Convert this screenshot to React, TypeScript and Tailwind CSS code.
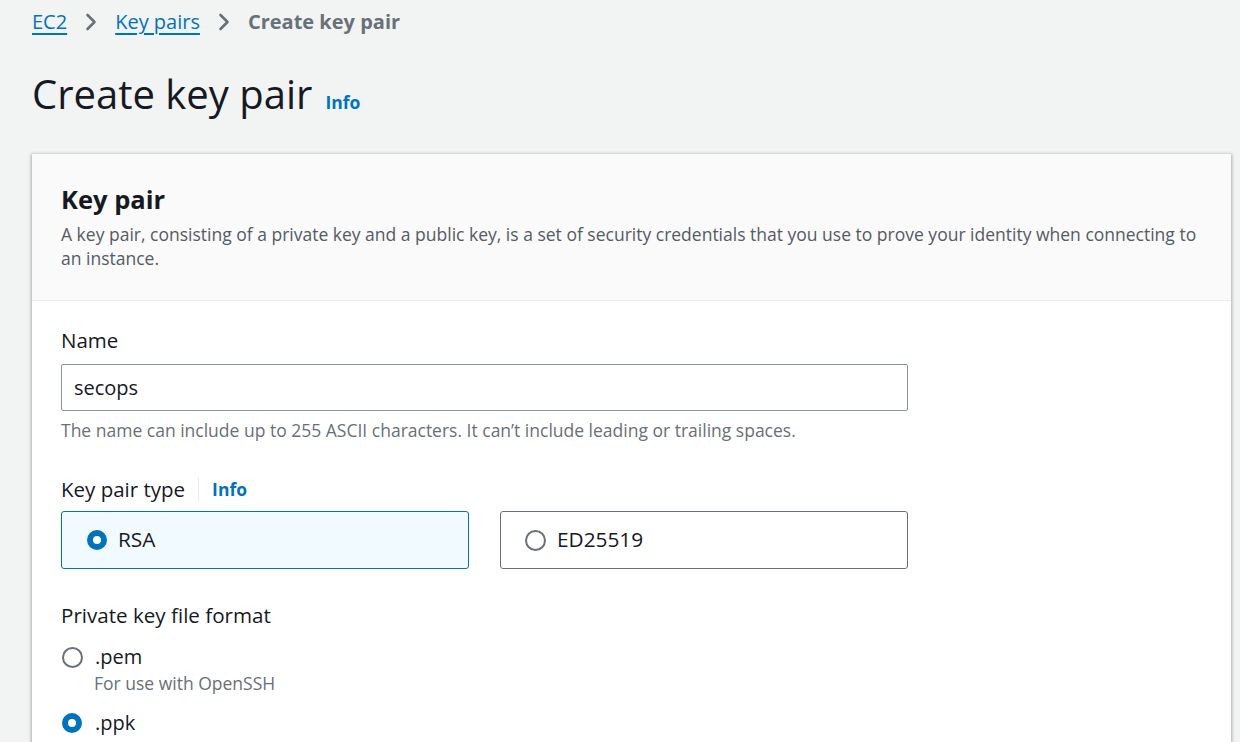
import React from "react";

const ff = { fontFamily: '"Open Sans", "Noto Sans", sans-serif' };

function Chevron() {
  return (
    <svg width="14" height="20" viewBox="0 0 14 20" className="mx-[17px]">
      <path d="M3.5 3 L10.5 10 L3.5 17" fill="none" stroke="#687078" strokeWidth="2.6" strokeLinecap="round" strokeLinejoin="round" />
    </svg>
  );
}

function Radio({ checked }: { checked: boolean }) {
  return checked ? (
    <span className="inline-block w-[20px] h-[20px] rounded-full border-[6px] border-[#0073bb] bg-white shrink-0" />
  ) : (
    <span className="inline-block w-[21px] h-[21px] rounded-full border-2 border-[#687078] bg-white shrink-0" />
  );
}

export default function App() {
  return (
    <div className="min-h-[742px] w-[1240px] bg-[#f2f3f3] text-[#16191f] overflow-hidden" style={ff}>
      <div className="pl-[32px]">
        <nav className="flex items-center h-[44px] text-[20px]">
          <a className="text-[#0073bb] underline underline-offset-[4px]">EC2</a>
          <Chevron />
          <a className="text-[#0073bb] underline underline-offset-[4px]">Key pairs</a>
          <Chevron />
          <span className="text-[#687078] font-bold">Create key pair</span>
        </nav>
        <div className="flex items-baseline gap-[13px] mt-[22px]">
          <h1 className="text-[40px] leading-[56px] font-normal">Create key pair</h1>
          <span className="text-[17.5px] font-bold text-[#0073bb]">Info</span>
        </div>
      </div>
      <div className="mt-[32px] ml-[32px] w-[1199px] bg-white shadow-[0_1px_3px_1px_rgba(0,28,36,0.3)]">
        <div className="bg-[#fafafa] border-b border-[#eaeded] px-[29px] pt-[27px] pb-[30px]">
          <h2 className="text-[25.5px] font-bold leading-[36px]">Key pair</h2>
          <p className="text-[17.5px] leading-[24px] text-[#545b64] mt-[5px]">
            A key pair, consisting of a private key and a public key, is a set of security credentials that you use to prove your identity when connecting to an instance.
          </p>
        </div>
        <div className="px-[29px] pt-[26px] pb-[40px]">
          <label className="block text-[20.5px] leading-[26px]">Name</label>
          <div className="mt-[11px] w-[847px] h-[47px] border border-[#879596] rounded-[2px] flex items-center px-[12px] text-[20px]">
            secops
          </div>
          <p className="mt-[7px] text-[17.5px] leading-[24px] text-[#687078]">
            The name can include up to 255 ASCII characters. It can’t include leading or trailing spaces.
          </p>
          <div className="mt-[34px] flex items-center h-[26px] text-[20.5px]">
            <span>Key pair type</span>
            <span className="ml-[13px] mr-[13px] w-px h-[25px] bg-[#eaeded]" />
            <span className="text-[#0073bb] font-bold text-[17.5px]">Info</span>
          </div>
          <div className="mt-[9px] flex gap-[31px]">
            <div className="w-[408px] h-[58px] border border-[#0073bb] bg-[#f1faff] rounded-[3px] flex items-center pl-[25px] gap-[11px] text-[20.8px]">
              <Radio checked />
              <span>RSA</span>
            </div>
            <div className="w-[408px] h-[58px] border border-[#687078] bg-white rounded-[3px] flex items-center pl-[24px] gap-[11px] text-[20.8px]">
              <Radio checked={false} />
              <span>ED25519</span>
            </div>
          </div>
          <label className="block mt-[33px] text-[20.6px] leading-[26px]">Private key file format</label>
          <div className="mt-[16px] pl-[1px] flex items-center gap-[12px] text-[20px] leading-[26px]">
            <Radio checked={false} />
            <span>.pem</span>
          </div>
          <div className="pl-[33px] text-[17.5px] leading-[24px] text-[#687078] mt-[1px]">For use with OpenSSH</div>
          <div className="mt-[15px] pl-[1px] flex items-center gap-[13px] text-[20px] leading-[26px]">
            <Radio checked />
            <span>.ppk</span>
          </div>
        </div>
      </div>
    </div>
  );
}
